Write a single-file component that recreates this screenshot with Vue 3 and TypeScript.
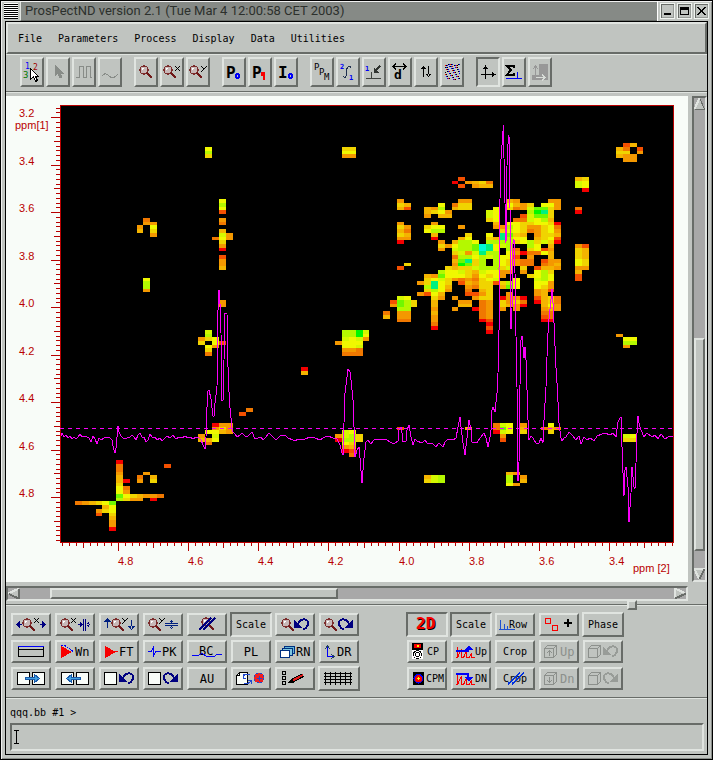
<script setup lang="ts">
import { ref } from 'vue'

interface Tool {
  label: string
  art: string
  pressed?: boolean
  disabled?: boolean
}

interface PanelKey {
  label: string
  text?: string
  size?: 'large'
  art?: string
  pressed?: boolean
  wide?: boolean
  disabled?: boolean
}

const command = ref('')
const menus = ['File', 'Parameters', 'Process', 'Display', 'Data', 'Utilities']

/* ---------- icon pieces ---------- */

const MONO = 'font-family="DejaVu Sans Mono, monospace"'

function lens(x: number, y: number): string {
  return (
    `<circle cx="${x}" cy="${y}" r="4" fill="#c8b8b8" stroke="#7c2c2c" stroke-width="1.3"/>` +
    `<path d="M${x - 2} ${y}v-2h2" fill="none" stroke="#fff"/>` +
    `<path d="M${x + 3} ${y + 3}l5 5" stroke="#701818" stroke-width="2" fill="none"/>`
  )
}
function ex(x: number, y: number): string {
  return `<path d="M${x} ${y}l5 5M${x + 5} ${y}l-5 5" stroke="#000" stroke-width="1.2" fill="none"/>`
}
function wye(x: number, y: number): string {
  return `<path d="M${x} ${y}l3 3M${x + 6} ${y}l-6 6" stroke="#000" stroke-width="1.2" fill="none"/>`
}
function undo(x: number, color: string): string {
  return (
    `<path d="M${x} 4v9h8z" fill="${color}"/>` +
    `<path d="M${x + 4} 9C${x + 6} 3 ${x + 14} 3 ${x + 14} 8C${x + 14} 12 ${x + 11} 14 ${x + 9} 14" fill="none" stroke="${color}" stroke-width="2"/>`
  )
}
function redo(x: number, color: string): string {
  return (
    `<path d="M${x + 15} 4v9h-8z" fill="${color}"/>` +
    `<path d="M${x + 11} 9C${x + 9} 3 ${x + 1} 3 ${x + 1} 8C${x + 1} 12 ${x + 4} 14 ${x + 6} 14" fill="none" stroke="${color}" stroke-width="2"/>`
  )
}
function box(x: number): string {
  return `<rect x="${x + 0.5}" y="3.5" width="12" height="12" fill="#f8fcf8" stroke="#000"/>`
}
function word(x: number, y: number, size: number, text: string, color = '#000', weight = 400): string {
  return `<text x="${x}" y="${y}" font-size="${size}" font-weight="${weight}" fill="${color}" ${MONO}>${text}</text>`
}

const cube = '<path d="M3.5 6.5h9v9h-9zM3.5 6.5l3-3h9v9l-3 3M12.5 6.5l3-3" fill="none" stroke="#8c908c"/>'
const pointer = 'v11l3-3 2 5 2-1-2-4h3z'
const inkColors = ['#000', '#0000f8', '#f80000', '#000', '#0000f8']
const speckles = Array.from({ length: 15 * 16 }, (_, i) => i)
  .filter((i) => (Math.imul(i + 3, 2654435761) >>> 13) % 10 < 3)
  .map((i, n) => `<rect x="${3 + (i % 15)}" y="${5 + Math.floor(i / 15)}" width="1" height="1" fill="${inkColors[n % 5]}"/>`)
  .join('')

const toolGroups: Tool[][] = [
  [
    {
      label: 'Pick point',
      art:
        word(3, 10, 8, '1', '#0000f8') + word(11, 11, 8, '2', '#a00000') + word(1, 19, 9, '3', '#007800') +
        `<path d="M8.5 9.5${pointer}" fill="#fff" stroke="#000"/>`,
    },
    { label: 'Select', disabled: true, art: `<path d="M7 6${pointer}" fill="#888c88" stroke="#888c88"/>` },
    { label: 'Pulse', disabled: true, art: '<path d="M2 18.5H5.5V7.5H9.5V18.5H12.5V7.5H16.5V18.5H18" fill="none" stroke="#888c88"/>' },
    { label: 'Smooth', disabled: true, art: '<path d="M2 17L5 14.5L8 16L11 18.5H14L18 15.5" fill="none" stroke="#888c88"/>' },
  ],
  [
    { label: 'Zoom', art: lens(8, 11) },
    { label: 'Zoom X', art: lens(6, 11) + ex(13, 7) },
    { label: 'Zoom Y', art: lens(6, 11) + wye(13, 7) },
  ],
  [
    { label: 'Zero order phase', art: word(2, 19, 16, 'P', '#000', 700) + '<circle cx="13.5" cy="17" r="2" fill="none" stroke="#0000f8" stroke-width="2"/>' },
    { label: 'First order phase', art: word(2, 19, 16, 'P', '#000', 700) + '<path d="M11 13h4v8h-2v-4h-2z" fill="#f80000"/>' },
    { label: 'Intensity', art: word(2, 19, 16, 'I', '#000', 700) + '<circle cx="14.5" cy="17" r="2" fill="none" stroke="#0000f8" stroke-width="2"/>' },
  ],
  [
    { label: 'PPM', art: word(2, 11, 9, 'P') + word(7, 16, 9, 'P') + word(12, 21, 9, 'M') },
    {
      label: 'Integrate',
      art: word(2, 10, 7, '2', '#0000f8', 700) + word(11, 21, 7, '1', '#0000f8', 700) +
        '<path d="M5 17.5Q8 20 8.5 15V11Q10 5 13 8.5" fill="none" stroke="#203050"/>',
    },
    {
      label: 'Reference peak',
      art: word(1, 12, 7, '1', '#0000f8', 700) +
        '<path d="M2 19.5H7.5V13V19.5H17" fill="none" stroke="#404440"/><path d="M16 7L11 12" stroke="#303430" stroke-width="2"/><path d="M9.5 8v6h6z" fill="#303430"/>',
    },
    {
      label: 'Distance',
      art: '<path d="M3 7.5H16M6 4.5l-3 3 3 3M13 4.5l3 3-3 3" fill="none" stroke="#000"/>' + word(4, 20, 13, 'd', '#000', 700),
    },
    { label: 'Vertical order', art: '<path d="M7 8h1v10H7zM5 10l2.5-3L10 10zM12 7h1v10h-1zM10 15l2.5 3L15 15z"/>' },
    { label: 'Scatter', art: speckles },
  ],
  [
    { label: 'Axes', pressed: true, art: '<path d="M7 8h1v12H7zM3 15h13v1H3zM5 10l2.5-4L10 10zM14 13l4 2.5L14 18z"/>' },
    {
      label: 'Sum',
      art: '<path d="M10 9V7H3l4 4-4 5h7v-2" fill="none" stroke="#000" stroke-width="2"/><path d="M2 19.5H18M13.5 13V19" stroke="#0000f8" fill="none"/>',
    },
    {
      label: 'Region',
      disabled: true,
      art: '<path d="M9 5h9v16H2v-5h7z" fill="#989898"/><path d="M5.5 17V7M3 10l2.5-3L8 10" fill="none" stroke="#989898"/><path d="M6 18.5H15M12 15.5l3 3-3 3" fill="none" stroke="#d8dcd8"/>',
    },
  ],
]

const leftPanel: PanelKey[] = [
  { label: 'Expand X', art: lens(14, 8) + ex(21, 3) + '<path d="M3 9.5l4-4v8zM33 9.5l-4-4v8zM7 9h2v1H7zM27 9h2v1h-2z" fill="#000080"/>' },
  { label: 'Shrink X', art: lens(8, 8) + ex(14, 3) + '<path d="M26 4h1v12h-1zM28 4h1v12h-1zM21 9h5v1h-5zM29 9h4v1h-4zM23 7l3 2.5-3 2.5zM32 7l-3 2.5 3 2.5z" fill="#000080"/>' },
  { label: 'Expand Y', art: lens(15, 8) + wye(21, 3) + '<path d="M6 4h1v9H6zM3 7l3.5-4L10 7zM30 5h1v9h-1zM27 11l3.5 4L34 11z" fill="#002080"/>' },
  { label: 'Shrink Y', art: lens(8, 8) + wye(14, 3) + '<path d="M20 8h13v1H20zM20 10h13v1H20zM24 6h5l-2.5 2zM24 13h5l-2.5-2zM26 5h1v2h-1zM26 12h1v2h-1z" fill="#002080"/>' },
  { label: 'Zoom off', art: lens(17, 7) + '<path d="M10 15L22 3M14 15L26 3" stroke="#000080" stroke-width="1.5"/>' },
  { label: 'Scale', text: 'Scale', pressed: true, wide: true },
  { label: 'Zoom undo', art: lens(9, 8) + undo(17, '#000080') },
  { label: 'Zoom redo', art: lens(8, 8) + redo(17, '#000080') },

  { label: 'Window', art: '<path d="M5.5 4.5v10h25v-10M5 7.5h26" fill="none" stroke="#000"/><path d="M5 4.5h26" stroke="#0000f8"/>' },
  { label: 'Window function', art: '<path d="M4 4v12l11-6z" fill="#f80000"/><path d="M4 3.5H8L16 9.5" fill="none" stroke="#0000f8" stroke-dasharray="2 1"/>' + word(18, 14, 12, 'Wn') },
  { label: 'Fourier transform', art: '<path d="M4 4v12l11-6z" fill="#f80000"/><path d="M12 9.5h5" stroke="#f80000"/>' + word(18, 14, 12, 'FT') },
  { label: 'Peak', art: '<path d="M3 9.5H6.5L8.5 4.5V14.5L10.5 9.5H16" fill="none" stroke="#0000f8"/>' + word(17, 14, 12, 'PK') },
  { label: 'Baseline correction', art: word(10, 13, 12, 'BC') + '<path d="M3 13.5H9L13 11.5L18 14.5H25L28 12.5H33" fill="none" stroke="#0000f8"/>' },
  { label: 'PL', text: 'PL', size: 'large' },
  {
    label: 'Run',
    art: '<path d="M7.5 4.5h10v7h-10z" fill="#60b8d8" stroke="#003080"/><path d="M5.5 6.5h10v7h-10z" fill="#80c8e0" stroke="#003080"/><path d="M3.5 8.5h9v7h-9z" fill="#fff" stroke="#003080"/>' + word(19, 14, 12, 'RN'),
  },
  { label: 'Direction', art: '<path d="M6.5 5V14.5H12" fill="none" stroke="#0000f8"/><path d="M4 7l2.5-3L9 7M10 12l3 2.5L10 17" fill="none" stroke="#204060"/>' + word(16, 14, 12, 'DR') },

  { label: 'Shift right', art: box(4) + box(19) + '<path d="M12.5 8.5h9v-3l5 4-5 4v-3h-9z" fill="#40a0e0" stroke="#1858a8"/>' },
  { label: 'Shift left', art: box(4) + box(19) + '<path d="M23.5 8.5h-9v-3l-5 4 5 4v-3h9z" fill="#40a0e0" stroke="#1858a8"/>' },
  { label: 'Undo', art: box(3) + undo(18, '#000080') },
  { label: 'Redo', art: box(3) + redo(18, '#000080') },
  { label: 'AU', text: 'AU', size: 'large' },
  {
    label: 'Convert',
    art:
      '<path d="M6.5 3.5h8v12h-11v-9zM6.5 3.5v3h-3" fill="#f8fcf8" stroke="#000"/>' +
      '<path d="M17 6q-5-2-7 2M10 5v4h3M11 14q5 2 7-3M18 15v-4h-3" fill="none" stroke="#2048d0"/>' +
      '<circle cx="26" cy="9" r="5" fill="#f02020" stroke="#2048d0" stroke-dasharray="2 2"/><path d="M26.5 7v5M24 9.5h5" stroke="#2048d0"/>',
  },
  {
    label: 'Edit list',
    art:
      '<path d="M5.5 2.5h3v3h-3zM5.5 7.5h3v3h-3zM5.5 12.5h3v3h-3z" fill="none" stroke="#000"/>' +
      '<path d="M15 12L26 6" stroke="#000" stroke-width="4"/><path d="M15 12L26 6" stroke="#e01818" stroke-width="2"/><path d="M10 14l5-4 2 4z" fill="#000"/>',
  },
  {
    label: 'Grid',
    wide: true,
    art: '<path d="M3 4.5h28M3 7.5h28M3 10.5h28M3 13.5h28M4.5 3v13M9.5 3v13M14.5 3v13M19.5 3v13M24.5 3v13M29.5 3v13" stroke="#000"/>',
  },
]

const spectrum = '<path d="M3 15.5H4.5V5V15.5L8.5 7V15.5H10.5L13.5 9V15.5H16.5L18.5 11V15.5H22" fill="none" stroke="#f80000"/>'

const rightPanel: PanelKey[] = [
  { label: '2D', pressed: true, wide: true, art: word(8, 15, 16, '2D', '#000', 700) + word(7, 14, 16, '2D', '#f80000', 700) },
  { label: 'Scale', text: 'Scale', pressed: true, wide: true },
  { label: 'Row', art: '<path d="M3.5 5V14.5M7.5 9V14M10.5 11V14M2 14.5H18" fill="none" stroke="#2050d0"/>' + word(12, 13, 10, 'Row') },
  { label: 'Add peak', art: '<path d="M4.5 3.5h5v5h-5zM11.5 10.5h5v5h-5z" fill="none" stroke="#f80000"/><path d="M23 8h8M27 4v8" stroke="#000" stroke-width="2"/>' },
  { label: 'Phase', text: 'Phase', wide: true },

  {
    label: 'Contour plot',
    art:
      '<path d="M3 1h11v7H3z" fill="#000"/><path d="M5 2h7v4H5z" fill="#f80000"/><path d="M8 3h2v2H8z" fill="#f8f800"/><path d="M3 8h11v9H3z" fill="#fff"/>' +
      '<circle cx="8.5" cy="12.5" r="4" fill="none" stroke="#000"/><circle cx="8.5" cy="12.5" r="2" fill="none" stroke="#000"/>' + word(18, 13, 10, 'CP'),
  },
  { label: 'Up', art: spectrum + '<path d="M3 9h12V6" fill="none" stroke="#0000f8" stroke-width="2"/><path d="M12 8l4-5 4 5z" fill="#0000f8"/>' + word(22, 13, 10, 'Up') },
  { label: 'Crop', text: 'Crop' },
  { label: 'Plane up', disabled: true, art: cube + '<path d="M8.5 14V9M6 11l2.5-2.5L11 11" fill="none" stroke="#8c908c"/>' + word(19, 14, 12, 'Up', '#8c908c') },
  { label: 'Cube undo', disabled: true, art: cube + undo(18, '#989c98') },

  {
    label: 'Contour map',
    art: '<path d="M4 3h11v13H4z" fill="#000"/><circle cx="9.5" cy="9.5" r="5" fill="#0000f8"/><circle cx="9.5" cy="9.5" r="3.5" fill="#f80000"/><path d="M8 9h3v1H8zM9 8h1v3H9z" fill="#f8f800"/>' + word(17, 13, 10, 'CPM'),
  },
  { label: 'Down', art: spectrum + '<path d="M3 5h12v4" fill="none" stroke="#0000f8" stroke-width="2"/><path d="M12 8l4 5 4-5z" fill="#0000f8"/>' + word(22, 13, 10, 'DN') },
  { label: 'Crop off', art: word(6, 13, 10, 'Crop') + '<path d="M11 15L23 4M15 15L27 4" stroke="#0030e0" stroke-width="1.5"/>' },
  { label: 'Plane down', disabled: true, art: cube + '<path d="M8.5 8V13M6 11l2.5 2.5L11 11" fill="none" stroke="#8c908c"/>' + word(19, 14, 12, 'Dn', '#8c908c') },
  { label: 'Cube redo', disabled: true, art: cube + redo(18, '#989c98') },
]

/* ---------- spectrum ---------- */

const palette: Record<string, string> = {
  r: '#f40000', o: '#f45000', d: '#f07800', m: '#f49800', g: '#f4b400', y: '#f0d400',
  Y: '#f0f800', l: '#d4f800', L: '#b4f800', n: '#70f800', G: '#00f800', e: '#00f080', c: '#00f8d8',
}

// Each entry: data row, then "column:levels" runs.
const intensity: [number, string][] = [
  [-1, '80:og'], [0, '19:Y 39:yy 79:gd.o'], [1, '19:L 39:YY 79:yy.m'], [2, '19:y 39:mm 79:gmm'], [3, '80:mm'],
  [8, '56:o 73:gy'], [9, '55:r.mgyd 73:lY'], [10, '56:o.mgg 73:lY'], [11, '74:r'],
  [14, '21:Y 47:m 56:mm 63:gm 69:mm'], [15, '21:L 47:yg 53:Y 55:dyy 63:Ygmy.YYm'],
  [16, '21:Y 47:go 51:gmL 55:gyy 61:Y 63:ydmlnnym 73:d'], [17, '21:o 51:gyYm 60:lY 66:LGey 73:r'],
  [18, '51:m.gg 60:lY 65:olnny'], [19, '10:d 21:m 60:yY 64:ddlYLg'],
  [20, '10:mm 21:d 47:m 52:m 61:g 63:YYyyYYyr'], [21, '9:m 11:Y 47:ym 51:yYY 56:m 61:m.LYymmyYd'],
  [21, '62:m'], [22, '9:g 11:y 21:g 47:gd 51:YLL 62:ylYydmyYm'],
  [23, '11:m 21:lm 47:yg 52:g 57:y 60:Y 62:enyg.myyg'], [24, '20:dYm 47:mm 52:r 56:gY 60:yg 62:eLYY.gyYo'],
  [25, '21:y 47:r 53:m 55:gLLY 60:LLLLyYLylyr'], [26, '21:m 53:ym 55:YLLnceYlL..LY.g 73:mo'],
  [27, '21:r 53:m 55:lLLnceY.Ld.yYom 73:yg'], [28, '55:ylmleLL.YmrddYg 73:yg'],
  [29, '21:o 55:dLLYLlLYYo.m..g 73:yg'], [30, '21:m 55:gneyL.LYymdd.omm 73:Yy'],
  [31, '21:m 48:y 55:mGnyL.LYymdd.dmg 73:Yy'], [32, '21:g 47:o 54:ygyylLLLyl.y.oggm 73:mm'],
  [33, '53:LYYlyglYYmm.m.YLy 73:g'], [34, '51:gmnYYYymYyYm...yYLY 73:o'],
  [35, '10:Y 51:yYlymdmdyYl..Y..lLY 73:o'], [36, '10:L 50:myeYy.ogmyyoyLY..YYm'],
  [37, '10:L 51:LeYg..mdyy.gnY..Yym'], [38, '10:m 51:yLYm..d.gy 67:mgo'],
  [39, '50:moYg 57:oomy 63:m 67:mg'], [40, '47:lY 52:ym.m..myy 62:rmmr.ogyd'],
  [41, '21:m 46:onLy 52:g 56:mm.dm 62:ymyd.rgyd'], [42, '21:m 46:mnLy 52:g 56:gg.dm 62:ygmr 68:gYm'],
  [43, '47:LL 52:m 55:m..rdm 62:m.m 68:mgm'], [44, '45:d.mm 52:g 59:dm 68:dd'],
  [45, '45:g.mm 52:m 59:dm 68:od'], [46, '47:dd 52:m 59:ro 68:rr'], [47, '52:d 60:r'], [48, '52:r 60:o'],
  [49, '19:l 39:LLGl 60:r'], [50, '19:L 39:LLGY 79:m'], [51, '18:myY 39:lYlm 80:YY'],
  [52, '18:y.Yo 38:mYYY 80:LL'], [53, '19:Ym 39:YYl 80:m'], [54, '19:y 39:mmd'], [55, '19:d 39:ddd'],
  [59, '33:r'], [60, '33:g'], [70, '25:d'], [71, '24:o'],
  [74, '20:rmm 61:dlY.m 69:Y'], [75, '20:mym 47:o 57:g 61:dnY.g..dgm'],
  [76, '19:YYgm 39:lY 61:rlY.y 69:y'], [77, '18:m.l 38:mlLy 62:m 80:lY'],
  [78, '18:ggY 38:rLLy 62:o 80:yy'], [79, '19:d 39:Yy'], [80, '39:mg'], [81, '39:ro'], [82, '40:d'],
  [84, '6:r'], [85, '6:d 13:o'], [86, '6:d'], [87, '6:m 10:m 63:gm'], [88, '6:g 9:d.g 51:glL 63:L.m'],
  [89, '6:gr.m.y 51:ylL 63:L.g'], [90, '6:y 63:Ym'], [91, '6:Yd'], [92, '6:Ym'], [93, '6:nYygmmd'],
  [94, '6:Lymm.r'], [95, '0:dmgyYn'], [96, '4:gY'], [97, '3:myY'], [98, '3:o.y'], [99, '5:g'],
  [100, '5:m'], [101, '5:m'], [102, '5:r'],
]

const colX = (c: number): number => Math.round(75 + c * 6.848)
const rowY = (r: number): number => Math.round(147 + r * 3.73)

const cells = intensity.flatMap(([row, runs]) =>
  runs.split(' ').flatMap((run) => {
    const [start, levels] = run.split(':')
    return [...levels].flatMap((level, i) => {
      if (level === '.') return []
      const c = Number(start) + i
      return [{
        x: colX(c), y: rowY(row), w: colX(c + 1) - colX(c), h: rowY(row + 1) - rowY(row), fill: palette[level],
      }]
    })
  }),
)

const trace = `61,436 62,433 64,437 66,435 68,438 70,436 72,439 74,437 76,439 78,437 80,434 82,437 85,436 87,437 89,438 91,442
93,436 95,439 97,444 99,438 101,440 104,438 107,437 110,438 112,440 113,446 115,453 116,448 118,426 119,432 121,436 124,439
127,438 130,437 132,435 134,437 136,440 138,435 140,433 142,437 144,437 146,442 148,440 150,434 152,437 155,437 157,440
160,438 162,441 164,439 167,436 170,438 173,435 176,439 179,437 182,438 185,436 188,438 190,437 193,439 196,437 199,438
201,440 203,445 205,449 206,437 207,407 208,391 209,390 211,399 213,416 214,416 215,403 217,387 218,310 219,290 220,304
221,333 222,400 223,400 224,360 225,313 227,314 228,367 229,392 230,408 231,418 232,428 233,432 235,434 237,437 240,435
242,433 245,436 247,437 250,434 252,432 255,439 258,438 261,437 263,440 266,437 269,433 273,437 276,440 280,436 285,435
288,438 293,440 295,441 298,439 305,439 310,437 315,438 320,440 325,437 328,436 333,438 337,439 340,445 342,453 343,455
344,423 345,393 347,377 348,369 350,372 351,380 353,400 354,427 355,457 357,450 359,447 360,458 362,483 364,458 366,442
368,440 371,444 374,440 378,439 383,439 387,440 390,442 394,444 398,441 399,430 401,427 402,433 403,442 406,441 407,430
409,425 411,437 413,445 415,439 417,441 422,443 425,440 428,444 432,443 436,447 439,443 443,447 445,442 448,439 453,440
456,438 458,427 460,417 461,427 463,443 465,455 467,438 468,428 469,420 471,430 472,442 477,443 480,438 484,433 486,438
488,447 490,437 491,430 492,410 493,407 495,412 497,393 498,373 499,330 499,269 500,199 501,159 503,131 503,125 504,158
505,203 506,243 507,166 508,144 509,135 510,208 511,329 512,309 513,243 514,239 515,273 516,336 517,387 518,481 519,463
520,385 521,340 522,336 524,358 525,347 526,360 527,390 528,420 529,440 531,436 533,438 536,443 539,443 541,438 543,443
544,420 546,387 547,357 548,333 549,319 551,299 552,289 553,303 554,323 556,368 557,383 558,402 559,423 561,438 562,441
564,438 566,437 569,432 573,436 576,440 579,436 581,444 584,437 587,440 590,438 594,441 597,436 602,434 605,433 610,435
613,433 616,437 618,422 620,418 621,417 622,447 623,473 624,496 625,470 626,467 628,487 629,522 631,493 632,467 634,487
635,489 636,463 637,433 638,416 639,423 641,430 644,437 647,433 652,437 655,435 658,439 661,434 665,439 668,437 673,436`

const tickLength = (k: number): number => (k % 10 === 0 ? 9 : k % 5 === 0 ? 6 : 4)

const leftTicks = Array.from({ length: 92 }, (_, i) => i - 2).map((k) => ({
  pos: Math.round(117 + k * 4.75) + 0.5,
  len: tickLength(k),
})).filter((t) => t.pos < 542)
const bottomTicks = Array.from({ length: 88 }, (_, i) => i - 8).map((k) => ({
  pos: Math.round(118 + k * 7.015) + 0.5,
  len: tickLength(k),
})).filter((t) => t.pos < 674)

const leftLabels = Array.from({ length: 9 }, (_, i) => ({ y: Math.round(117 + i * 47.5), text: (3.2 + i * 0.2).toFixed(1) }))
const bottomLabels = Array.from({ length: 8 }, (_, i) => ({ x: Math.round(118 + i * 70.15), text: (4.8 - i * 0.2).toFixed(1) }))
</script>

<template>
  <div class="window">
    <header class="titlebar">
      <button class="stripes" type="button" aria-label="Window menu"></button>
      <h1 class="title">ProsPectND version 2.1 (Tue Mar 4 12:00:58 CET 2003)</h1>
      <div class="controls">
        <button type="button" aria-label="Minimize">
          <svg width="11" height="12" viewBox="0 0 11 12"><path d="M2 8h7v2H2z" /></svg>
        </button>
        <button type="button" aria-label="Maximize">
          <svg width="11" height="12" viewBox="0 0 11 12"><path d="M1 2h9v8H1zM2 5v4h7V5z" fill-rule="evenodd" /></svg>
        </button>
        <button type="button" aria-label="Close">
          <svg width="11" height="12" viewBox="0 0 11 12"><path d="M2 2l7 8M9 2l-7 8" fill="none" stroke="#000" stroke-width="1.5" /></svg>
        </button>
      </div>
    </header>

    <main class="content">
      <nav class="menubar">
        <button v-for="menu in menus" :key="menu" type="button">{{ menu }}</button>
      </nav>

      <div class="toolbar" role="toolbar" aria-label="Tools">
        <div v-for="(group, g) in toolGroups" :key="g" class="tool-group">
          <button
            v-for="tool in group"
            :key="tool.label"
            type="button"
            class="tool"
            :class="{ pressed: tool.pressed }"
            :disabled="tool.disabled"
            :aria-label="tool.label"
          >
            <svg width="20" height="26" viewBox="0 0 20 26" v-html="tool.art"></svg>
          </button>
        </div>
      </div>

      <section class="workspace">
        <div class="canvas">
          <svg class="plot" viewBox="6 96 682 486" role="img" aria-label="2D spectrum">
            <rect x="60" y="105" width="614" height="438" fill="#b80000" />
            <rect x="61" y="106" width="612" height="436" fill="#000" />
            <g>
              <rect v-for="(cell, i) in cells" :key="i" :x="cell.x" :y="cell.y" :width="cell.w" :height="cell.h" :fill="cell.fill" />
            </g>
            <path d="M60 428.5H673" class="cursor-line" />
            <polyline :points="trace" class="trace" />
            <g class="ticks">
              <path v-for="t in leftTicks" :key="t.pos" :d="`M60 ${t.pos}h${-t.len}`" />
              <path v-for="t in bottomTicks" :key="t.pos" :d="`M${t.pos} 543v${t.len - 1}`" />
            </g>
            <g class="axis-text">
              <text v-for="l in leftLabels" :key="l.text" x="19" :y="l.y">{{ l.text }}</text>
              <text v-for="l in bottomLabels" :key="l.text" :x="l.x" y="565">{{ l.text }}</text>
              <text x="15" y="129">ppm[1]</text>
              <text x="633" y="572">ppm [2]</text>
            </g>
          </svg>
        </div>

        <div class="scrollbar vertical">
          <button type="button" class="arrow" aria-label="Scroll up">
            <svg width="11" height="12" viewBox="0 0 11 12"><path d="M5.5 0L0 11H11z" fill="#c0c4c0" /><path d="M5.5 0L.5 11" stroke="#e0e4e0" stroke-width="2" /><path d="M6 1l4.5 10H1" fill="none" stroke="#686c68" /></svg>
          </button>
          <span class="before"></span>
          <span class="thumb"></span>
          <span class="after"></span>
          <button type="button" class="arrow" aria-label="Scroll down">
            <svg width="11" height="12" viewBox="0 0 11 12"><path d="M0 1H11L5.5 12z" fill="#c0c4c0" /><path d="M11 1H.5L5 11" fill="none" stroke="#e0e4e0" stroke-width="2" /><path d="M10.5 1l-5 10" stroke="#686c68" stroke-width="2" /></svg>
          </button>
        </div>

        <div class="scrollbar horizontal">
          <button type="button" class="arrow" aria-label="Scroll left">
            <svg width="12" height="11" viewBox="0 0 12 11"><path d="M0 5.5L11 0V11z" fill="#c0c4c0" /><path d="M11 .5L0 5.5" stroke="#e0e4e0" stroke-width="2" /><path d="M10.5 1v9.5L1 6" fill="none" stroke="#686c68" stroke-width="2" /></svg>
          </button>
          <span class="before"></span>
          <span class="thumb"></span>
          <span class="after"></span>
          <button type="button" class="arrow" aria-label="Scroll right">
            <svg width="12" height="11" viewBox="0 0 12 11"><path d="M1 0L12 5.5L1 11z" fill="#c0c4c0" /><path d="M11 5L1 .5V10" fill="none" stroke="#e0e4e0" stroke-width="2" /><path d="M12 5.5L1 10.5" stroke="#686c68" stroke-width="2" /></svg>
          </button>
        </div>
      </section>

      <section class="panel">
        <span class="sash"></span>
        <div class="key-grid left">
          <button
            v-for="key in leftPanel"
            :key="key.label"
            type="button"
            class="key"
            :class="{ pressed: key.pressed, wide: key.wide, large: key.size === 'large' }"
            :disabled="key.disabled"
            :aria-label="key.label"
          >
            <svg v-if="key.art" width="36" height="19" viewBox="0 0 36 19" v-html="key.art"></svg>
            <template v-else>{{ key.text }}</template>
          </button>
        </div>
        <div class="key-grid right">
          <button
            v-for="key in rightPanel"
            :key="key.label"
            type="button"
            class="key"
            :class="{ pressed: key.pressed, wide: key.wide }"
            :disabled="key.disabled"
            :aria-label="key.label"
          >
            <svg v-if="key.art" width="36" height="19" viewBox="0 0 36 19" v-html="key.art"></svg>
            <template v-else>{{ key.text }}</template>
          </button>
        </div>
      </section>

      <section class="console">
        <label class="prompt" for="command">qqq.bb #1 &gt;</label>
        <div class="entry">
          <input id="command" v-model="command" type="text" autocomplete="off" />
          <svg class="caret" width="7" height="14" viewBox="0 0 7 14"><path d="M1 .5H6M3.5 1V13M1 13.5H6" fill="none" stroke="#000" /></svg>
        </div>
      </section>
    </main>
  </div>
</template>

<style>
body {
  background: #c0c4c0;
}
</style>

<style scoped>
.window {
  --face: #c0c4c0;
  --light: #e0e4e0;
  --dark: #686c68;
  --trough: #a8a8a8;
  box-sizing: border-box;
  padding: 0 4px 4px;
  border: 1px solid #000;
  background: var(--face);
  box-shadow: inset 1px 1px #f0f0f0, inset -1px -1px #888c88;
  font-family: "DejaVu Sans Mono", monospace;
  font-size: 10px;
  color: #000;
}
.window *,
.window *::before {
  box-sizing: border-box;
}
button {
  margin: 0;
  padding: 0;
  border: 0;
  border-radius: 0;
  background: none;
  font: inherit;
  color: inherit;
}
svg {
  display: block;
  shape-rendering: crispEdges;
}

/* title bar */
.titlebar {
  display: flex;
  align-items: stretch;
  height: 20px;
  margin: 0 -2px;
}
.stripes {
  width: 14px;
  height: 16px;
  margin: 2px 2px 0 1px;
  background: repeating-linear-gradient(#fff 0 1px, #000 1px 2px);
}
.title {
  flex: 1;
  margin: 1px 0 0;
  padding-left: 4px;
  border-left: 1px solid var(--light);
  border-bottom: 1px solid var(--dark);
  background: #868a86;
  color: #2c302c;
  font: 400 13px/18px Roboto, sans-serif;
  white-space: nowrap;
  overflow: hidden;
}
.controls {
  display: flex;
  gap: 2px;
  padding: 2px 1px 2px 2px;
  border-left: 1px solid #fff;
}
.controls button {
  width: 15px;
  height: 16px;
  padding: 1px;
  border: 1px solid #f0f4f0;
  box-shadow: inset 1px 1px var(--dark), inset -1px -1px #989c98;
}

/* client area */
.content {
  border: 1px solid #000;
}
.menubar {
  display: flex;
  gap: 16px;
  height: 32px;
  padding: 0 10px;
  border: 2px solid;
  border-color: var(--light) var(--dark) var(--dark) var(--light);
}
.toolbar {
  display: flex;
  gap: 12px;
  padding: 2px 14px 4px;
  border-top: 1px solid var(--light);
  border-bottom: 1px solid var(--dark);
  box-shadow: 0 1px var(--light);
}
.tool-group {
  display: flex;
  gap: 2px;
}
.tool,
.key,
.thumb,
.sash {
  border: 2px solid;
  border-color: var(--light) var(--dark) var(--dark) var(--light);
}
.tool {
  width: 24px;
  height: 30px;
}
.pressed {
  border-color: var(--dark) var(--light) var(--light) var(--dark);
}

/* spectrum area */
.workspace {
  display: grid;
  grid-template-columns: 1fr 15px;
  gap: 4px;
  padding: 4px 0 3px;
}
.canvas {
  background: #f8fcf8;
}
.plot {
  width: 100%;
  height: auto;
}
.trace,
.cursor-line {
  fill: none;
  stroke: #f800f8;
  stroke-width: 1;
}
.cursor-line {
  stroke-dasharray: 4 4;
}
.ticks {
  stroke: #b80000;
}
.axis-text {
  fill: #b80000;
  font: 11px "Liberation Sans", sans-serif;
}
.scrollbar {
  display: flex;
  border: 2px solid;
  border-color: var(--dark) var(--light) var(--light) var(--dark);
  background: var(--trough);
}
.vertical {
  flex-direction: column;
}
.horizontal {
  height: 15px;
}
.arrow {
  flex: 0 0 12px;
}
.vertical .before { flex: 230; }
.vertical .thumb { flex: 211; }
.vertical .after { flex: 17; }
.horizontal .before { flex: 30; }
.horizontal .thumb { flex: 286; }
.horizontal .after { flex: 338; }
.thumb {
  background: var(--face);
}

/* key panel */
.panel {
  position: relative;
  display: flex;
  flex-wrap: wrap;
  gap: 4px 48px;
  padding: 7px 5px;
  border-top: 1px solid var(--dark);
  border-bottom: 1px solid var(--dark);
  box-shadow: inset 0 1px var(--light), 0 1px var(--light);
}
.sash {
  position: absolute;
  top: -5px;
  right: 70px;
  width: 10px;
  height: 10px;
  background: var(--face);
}
.key-grid {
  display: grid;
  gap: 4px;
  padding-top: 1px;
  grid-auto-rows: 23px;
}
.left {
  grid-template-columns: repeat(8, 40px);
}
.right {
  grid-template-columns: repeat(5, 40px);
}
.key {
  display: flex;
  align-items: center;
  justify-content: center;
}
.wide {
  margin: -1px;
}
.large {
  font-size: 12px;
}

/* console */
.console {
  padding: 1px 3px 3px 4px;
}
.prompt {
  display: block;
  height: 24px;
  line-height: 28px;
}
.entry {
  position: relative;
}
.entry input {
  display: block;
  width: 100%;
  height: 28px;
  padding: 0 4px;
  border: 2px solid;
  border-color: var(--dark) var(--light) var(--light) var(--dark);
  border-radius: 0;
  outline: 0;
  background: transparent;
  font: inherit;
}
.caret {
  position: absolute;
  left: 3px;
  top: 7px;
}
</style>
